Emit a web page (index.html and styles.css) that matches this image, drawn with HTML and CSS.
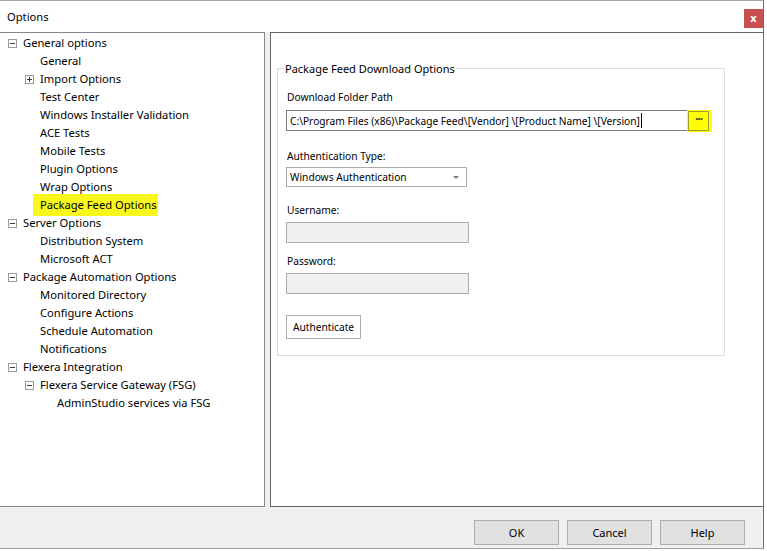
FILE: index.html
```html
<!DOCTYPE html>
<html lang="en">
<head>
  <meta charset="UTF-8">
  <title>Options</title>
  <link rel="stylesheet" href="styles.css">
</head>
<body>
  <div class="dialog">
    <div class="titlebar">
      <span class="title">Options</span>
      <span class="close">x</span>
    </div>

    <div class="main">
      <!-- Tree of option pages -->
      <div class="tree">
        <div class="node d0"><span class="toggle"><svg width="9" height="9" viewBox="0 0 9 9"><rect x="0.5" y="0.5" width="8" height="8" fill="#fff" stroke="#9a9a9a"/><path d="M2 4.5h5" stroke="#3c3c3c"/></svg></span>General options</div>
        <div class="node d1"><span class="toggle"></span>General</div>
        <div class="node d1"><span class="toggle"><svg width="9" height="9" viewBox="0 0 9 9"><rect x="0.5" y="0.5" width="8" height="8" fill="#fff" stroke="#9a9a9a"/><path d="M2 4.5h5M4.5 2v5" stroke="#3c3c3c"/></svg></span>Import Options</div>
        <div class="node d1"><span class="toggle"></span>Test Center</div>
        <div class="node d1"><span class="toggle"></span>Windows Installer Validation</div>
        <div class="node d1"><span class="toggle"></span>ACE Tests</div>
        <div class="node d1"><span class="toggle"></span>Mobile Tests</div>
        <div class="node d1"><span class="toggle"></span>Plugin Options</div>
        <div class="node d1"><span class="toggle"></span>Wrap Options</div>
        <div class="node d1"><span class="toggle"></span><span class="marked">Package Feed Options</span></div>
        <div class="node d0"><span class="toggle"><svg width="9" height="9" viewBox="0 0 9 9"><rect x="0.5" y="0.5" width="8" height="8" fill="#fff" stroke="#9a9a9a"/><path d="M2 4.5h5" stroke="#3c3c3c"/></svg></span>Server Options</div>
        <div class="node d1"><span class="toggle"></span>Distribution System</div>
        <div class="node d1"><span class="toggle"></span>Microsoft ACT</div>
        <div class="node d0"><span class="toggle"><svg width="9" height="9" viewBox="0 0 9 9"><rect x="0.5" y="0.5" width="8" height="8" fill="#fff" stroke="#9a9a9a"/><path d="M2 4.5h5" stroke="#3c3c3c"/></svg></span>Package Automation Options</div>
        <div class="node d1"><span class="toggle"></span>Monitored Directory</div>
        <div class="node d1"><span class="toggle"></span>Configure Actions</div>
        <div class="node d1"><span class="toggle"></span>Schedule Automation</div>
        <div class="node d1"><span class="toggle"></span>Notifications</div>
        <div class="node d0"><span class="toggle"><svg width="9" height="9" viewBox="0 0 9 9"><rect x="0.5" y="0.5" width="8" height="8" fill="#fff" stroke="#9a9a9a"/><path d="M2 4.5h5" stroke="#3c3c3c"/></svg></span>Flexera Integration</div>
        <div class="node d1"><span class="toggle"><svg width="9" height="9" viewBox="0 0 9 9"><rect x="0.5" y="0.5" width="8" height="8" fill="#fff" stroke="#9a9a9a"/><path d="M2 4.5h5" stroke="#3c3c3c"/></svg></span>Flexera Service Gateway (FSG)</div>
        <div class="node d2"><span class="toggle"></span>AdminStudio services via FSG</div>
      </div>

      <!-- Selected page -->
      <div class="page">
        <fieldset class="group">
          <legend>Package Feed Download Options</legend>

          <label class="lbl lbl-path">Download Folder Path</label>
          <div class="path-field">
            <span class="path-text">C:\Program Files (x86)\Package Feed\[Vendor] \[Product Name] \[Version]</span>
            <span class="caret"></span>
            <span class="browse-mark"><span class="browse">&middot;&middot;&middot;</span></span>
          </div>

          <label class="lbl lbl-auth">Authentication Type:</label>
          <div class="select">
            <span>Windows Authentication</span>
            <span class="arrow"></span>
          </div>

          <label class="lbl lbl-user">Username:</label>
          <div class="textbox"></div>

          <label class="lbl lbl-pass">Password:</label>
          <div class="textbox"></div>

          <button class="auth-btn">Authenticate</button>
        </fieldset>
      </div>
    </div>

    <div class="footer">
      <button class="dlg-btn">OK</button>
      <button class="dlg-btn">Cancel</button>
      <button class="dlg-btn">Help</button>
    </div>
  </div>
</body>
</html>
```

FILE: styles.css
```css
body {
  margin: 0;
  background: #fff;
  font-family: "Noto Sans", "Open Sans", sans-serif;
  font-size: 11px;
  color: #000;
  width: 767px;
  height: 551px;
  overflow: hidden;
}
.dialog {
  width: 764px;
  box-sizing: border-box;
  border-top: 1px solid #a5a5a5;
  border-right: 1px solid #6e6e6e;
  border-bottom: 1px solid #a0a0a0;
}
.titlebar {
  height: 31px;
  display: flex;
  justify-content: space-between;
  background: #fff;
}
.title {
  padding-left: 7px;
  line-height: 31px;
  font-size: 11.2px;
}
.close {
  margin-top: 8px;
  width: 19px;
  height: 19px;
  background: #c75050;
  color: #fff;
  font-weight: bold;
  font-size: 11px;
  line-height: 17px;
  text-align: center;
}
.main {
  height: 475px;
  display: flex;
  gap: 5px;
  background: #f0f0f0;
}
.tree {
  width: 265px;
  box-sizing: border-box;
  background: #fff;
  border: 1px solid #828790;
  border-left: none;
  padding-top: 1px;
  font-size: 11.2px;
}
.node {
  display: flex;
  align-items: center;
  height: 18px;
  line-height: 18px;
  white-space: nowrap;
}
.d0 { padding-left: 8px; }
.d1 { padding-left: 25px; }
.d2 { padding-left: 42px; }
.toggle {
  width: 15px;
  height: 9px;
  flex: none;
  display: flex;
}
.marked {
  background: #f8f81e;
  margin-left: -7px;
  padding: 2px 1px 2px 7px;
  line-height: 18px;
}
.page {
  flex: 1;
  background: #fff;
  border: 1px solid #646464;
  border-right: none;
}
.group {
  margin: 28px 0 0 6px;
  width: 448px;
  box-sizing: border-box;
  border: 1px solid #dcdcdc;
  padding: 0 8px 16px 8px;
  font-size: 10.2px;
}
.group legend {
  margin-left: -2px;
  padding: 0 1px;
  line-height: 15px;
  font-size: 11px;
}
.lbl {
  display: block;
  line-height: 15px;
  margin-left: 1px;
}
.lbl-path { margin-top: 14px; }
.lbl-auth { margin-top: 18px; }
.lbl-user { margin-top: 16px; }
.lbl-pass { margin-top: 11px; }
.path-field {
  margin-top: 5px;
  width: 425px;
  height: 21px;
  box-sizing: border-box;
  border: 1px solid #7a7a7a;
  display: flex;
  align-items: center;
  padding-left: 3px;
}
.path-text {
  white-space: pre;
}
.caret {
  width: 1px;
  height: 15px;
  background: #000;
  margin-left: 1px;
}
.browse-mark {
  margin: -2px -2px -2px auto;
  padding: 1px 3px 1px 1px;
  background: #ffff00;
  display: flex;
}
.browse {
  width: 19px;
  height: 18px;
  border: 1px solid #a0a028;
  font-weight: bold;
  font-size: 12px;
  line-height: 14px;
  text-align: center;
  color: #404040;
  letter-spacing: -1px;
}
.select {
  margin-top: 3px;
  width: 181px;
  height: 20px;
  box-sizing: border-box;
  border: 1px solid #acacac;
  display: flex;
  align-items: center;
  justify-content: space-between;
  padding: 0 7px 0 3px;
}
.arrow {
  width: 0;
  height: 0;
  border-left: 3px solid transparent;
  border-right: 3px solid transparent;
  border-top: 3px solid #7a7a7a;
}
.textbox {
  margin-top: 4px;
  width: 183px;
  height: 21px;
  box-sizing: border-box;
  background: #f0f0f0;
  border: 1px solid #adadad;
}
.auth-btn {
  display: block;
  margin-top: 21px;
  width: 75px;
  height: 24px;
  background: #fff;
  border: 1px solid #adadad;
  font: inherit;
  padding: 0;
}
.footer {
  height: 41px;
  box-sizing: border-box;
  background: #f0f0f0;
  display: flex;
  justify-content: flex-end;
  gap: 8px;
  padding: 13px 18px 0 0;
}
.dlg-btn {
  width: 85px;
  height: 25px;
  background: #e1e1e1;
  border: 1px solid #adadad;
  font-family: inherit;
  font-size: 11px;
  padding: 0;
}
```
